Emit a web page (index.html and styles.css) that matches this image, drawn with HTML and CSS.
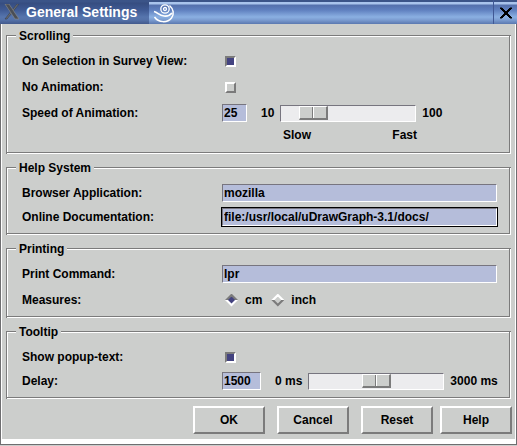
FILE: index.html
```html
<!DOCTYPE html>
<html lang="en">
<head>
<meta charset="utf-8">
<title>General Settings</title>
<link rel="stylesheet" href="styles.css">
</head>
<body>
<form class="window">
  <header class="titlebar">
    <div class="caption">
      <svg class="x-logo" width="16" height="16" viewBox="0 0 16 16" aria-hidden="true">
        <path d="M15 0h-2L1 15h2z" fill="#6b6f73" stroke="#3c4454" stroke-width=".7"/>
        <path d="M1 0h4l10 15h-4z" fill="#4a4e56" stroke="#85888a" stroke-width=".7"/>
      </svg>
      <h1>General Settings</h1>
    </div>
    <div class="bar">
      <svg width="22" height="20" viewBox="0 0 22 20" fill="none" stroke="#fff" aria-hidden="true">
        <circle cx="12" cy="6" r="4.200" stroke-width="1.300"/>
        <circle cx="12" cy="6" r="1.500" stroke-width="1.300"/>
        <path d="M1 8.500c4 1 5 4 10 4.500 3 .3 6-.5 8-3" stroke-width="1.700"/>
        <path d="M1.500 14c4 6 13 6 17 1 3-4 2-9-2-12.500" stroke-width="1.500"/>
      </svg>
    </div>
    <button type="button" class="close" aria-label="Close">
      <svg width="14" height="12" viewBox="0 0 14 12" aria-hidden="true"><path d="M1 1h2l10 10h-2zM13 1h-2L1 11h2z" fill="#000" stroke="#000"/></svg>
    </button>
  </header>
  <main>
    <fieldset class="loose">
      <legend>Scrolling</legend>
      <div class="row"><label for="survey">On Selection in Survey View:</label><input type="checkbox" id="survey" checked></div>
      <div class="row"><label for="noanim">No Animation:</label><input type="checkbox" id="noanim"></div>
      <div class="row"><label for="speed">Speed of Animation:</label><input type="text" class="short" id="speed" value="25">
        <div class="scale"><span>10</span><input type="range" min="10" max="100" value="25" aria-label="Speed of Animation"><span>100</span></div>
      </div>
      <div class="ends"><span>Slow</span><span>Fast</span></div>
    </fieldset>
    <fieldset>
      <legend>Help System</legend>
      <div class="row"><label for="browser">Browser Application:</label><input type="text" id="browser" value="mozilla"></div>
      <div class="row"><label for="docs">Online Documentation:</label><input type="text" class="current" id="docs" value="file:/usr/local/uDrawGraph-3.1/docs/"></div>
    </fieldset>
    <fieldset class="loose">
      <legend>Printing</legend>
      <div class="row"><label for="print">Print Command:</label><input type="text" id="print" value="lpr"></div>
      <div class="row"><span class="name" id="measures">Measures:</span>
        <div class="options" role="radiogroup" aria-labelledby="measures">
          <label><input type="radio" name="unit" checked>cm</label>
          <label><input type="radio" name="unit">inch</label>
        </div>
      </div>
    </fieldset>
    <fieldset>
      <legend>Tooltip</legend>
      <div class="row"><label for="popup">Show popup-text:</label><input type="checkbox" id="popup" checked></div>
      <div class="row"><label for="delay">Delay:</label><input type="text" class="medium" id="delay" value="1500">
        <div class="scale"><span>0 ms</span><input type="range" min="0" max="3000" value="1500" aria-label="Delay"><span>3000 ms</span></div>
      </div>
    </fieldset>
  </main>
  <footer>
    <div class="actions">
      <button type="button">OK</button>
      <button type="button">Cancel</button>
      <button type="button">Reset</button>
    </div>
    <button type="button">Help</button>
  </footer>
</form>
</body>
</html>
```
FILE: styles.css
```css
* { box-sizing: border-box; }

body {
  margin: 0;
  background: #cccecc;
  color: #000;
  font: bold 12px/16px "Liberation Sans", Arial, sans-serif;
}

.window {
  border: solid #6e6e70;
  border-width: 0 1px 1px;
}

/* Title bar */
.titlebar {
  display: flex;
  height: 24px;
  margin: 0 -1px;
  background: linear-gradient(#3b5488 0 2px, #a9c4ec 2px 4px, #5470ac 5px, #5f80bf 10px, #8bb0e2 17px, #7b9cd0 20px, #5a78b0 24px);
}

.caption {
  display: flex;
  align-items: center;
  gap: 6px;
  width: 149px;
  padding-left: 4px;
  background: linear-gradient(#3b5488 0 2px, #364d80 3px, #3f5a94 10px, #5675ad 17px, #5471a8 20px, #42598c 24px);
}

h1 {
  margin: 0;
  color: #fff;
  font-size: 14px;
  line-height: 24px;
}

.bar {
  display: flex;
  flex: 1;
  align-items: center;
  padding: 2px 4px 0;
}

.close {
  display: flex;
  align-items: center;
  justify-content: center;
  width: 24px;
  padding: 2px 0 0;
  border: solid #405894;
  border-width: 0 0 0 1px;
  background: none;
}

/* Groups */
main {
  display: grid;
  gap: 6px;
  padding: 4px 4px 0;
  border: solid #fff;
  border-width: 0 1px;
}

fieldset {
  display: grid;
  gap: 2px;
  min-width: 0;
  margin: 0;
  padding: 6px 12px 5px 14px;
  border: 2px groove #fff;
  /* Etched line: grey and white, one pixel each */
  border-image: url("data:image/svg+xml,%3Csvg xmlns='http://www.w3.org/2000/svg' width='6' height='6' shape-rendering='crispEdges'%3E%3Cpath fill='%237b7b7b' d='M0 0h6v1H0zM0 0h1v6H0zM4 1h1v4H4zM1 4h4v1H1z'/%3E%3Cpath fill='%23fff' d='M1 1h3v1H1zM1 1h1v3H1zM5 1h1v5H5zM1 5h5v1H1z'/%3E%3C/svg%3E") 2 stretch;
}

.loose { gap: 4px; }

legend {
  margin-left: -6px;
  padding: 0 3px;
}

.row {
  display: flex;
  align-items: center;
  height: 22px;
}

.row > label,
.name { flex: 0 0 200px; }

/* Fields */
input {
  appearance: none;
  margin: 0;
  border-radius: 0;
  font: inherit;
  outline: none;
}

input[type="text"] {
  flex: 1;
  min-width: 0;
  height: 18px;
  padding: 0 1px;
  border: 1px solid;
  border-color: #77757f #fff #fff #77757f;
  background: #b5bdda;
  color: #000;
}

input[type="text"].short { flex: 0 0 25px; }
input[type="text"].medium { flex: 0 0 39px; }
input[type="text"].current { box-shadow: 0 0 0 1px #000; }

input[type="checkbox"] {
  width: 11px;
  height: 11px;
  margin-left: 3px;
  border: 2px solid;
  border-color: #fff #7b7b7b #7b7b7b #fff;
}

input[type="checkbox"]:checked {
  border-color: #7b7b7b #fff #fff #7b7b7b;
  background: #434380;
}

.options {
  display: flex;
  gap: 9px;
  padding-left: 3px;
}

.options label {
  display: flex;
  align-items: center;
  gap: 7px;
}

input[type="radio"] {
  width: 13px;
  height: 13px;
  background: linear-gradient(#fff 50%, #7b7b7b 50%);
  clip-path: polygon(50% 0, 100% 50%, 50% 100%, 0 50%);
}

input[type="radio"]:checked { background: linear-gradient(#7b7b7b 50%, #fff 50%); }

input[type="radio"]::before {
  content: "";
  display: block;
  width: 7px;
  height: 7px;
  margin: 3px;
  background: #cccecc;
  clip-path: polygon(50% 0, 100% 50%, 50% 100%, 0 50%);
}

input[type="radio"]:checked::before { background: #434380; }

/* Scales */
.scale {
  display: flex;
  align-items: center;
  gap: 6px;
  padding-left: 14px;
  white-space: nowrap;
}

input[type="range"] {
  width: 136px;
  height: 17px;
  border: 1px solid;
  border-color: #77757f #fff #fff #77757f;
  background: #ececee;
}

input[type="range"]::-webkit-slider-thumb {
  appearance: none;
  width: 29px;
  height: 14px;
  border: 1px solid;
  border-color: #fff #7b7b7b #7b7b7b #fff;
  border-right-width: 2px;
  border-bottom-width: 2px;
  background: linear-gradient(90deg, #cccecc 12px, #7b7b7b 12px 13px, #fff 13px 14px, #cccecc 14px);
}

.ends {
  display: flex;
  justify-content: space-between;
  width: 134px;
  height: 14px;
  margin: 0 0 5px 261px;
  line-height: 14px;
}

/* Buttons */
footer {
  display: flex;
  justify-content: flex-end;
  gap: 7px;
  padding: 7px 3px 5px;
  border: solid #fff;
  border-width: 0 1px 5px;
}

.actions {
  display: flex;
  gap: 12px;
}

footer button {
  width: 72px;
  height: 28px;
  padding: 0;
  border: 2px solid;
  border-color: #fff #7b7b7b #7b7b7b #fff;
  background: #cccecc;
  color: #000;
  font: inherit;
}
```
